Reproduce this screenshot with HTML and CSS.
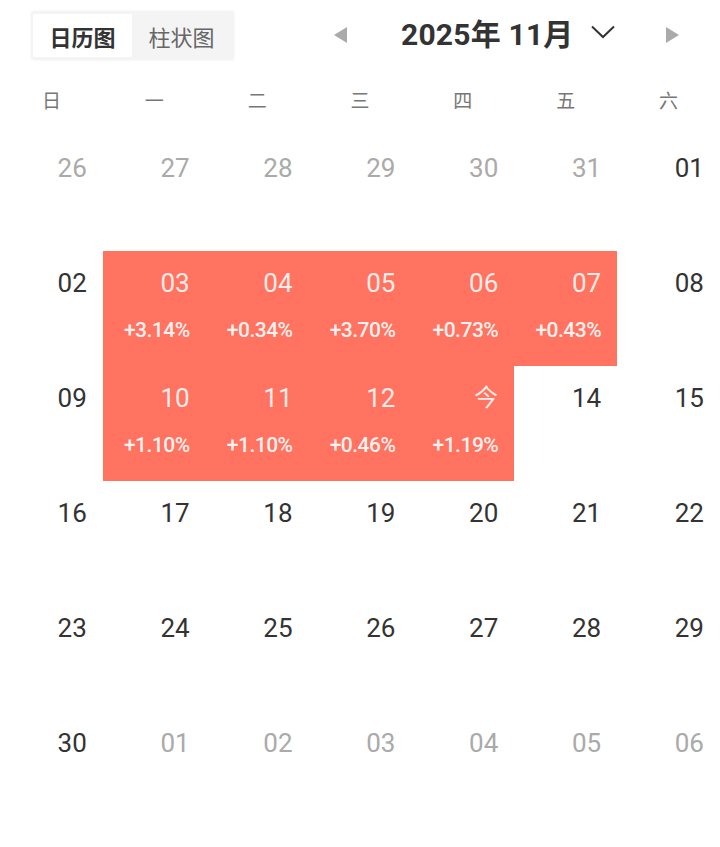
FILE: index.html
```html
<!DOCTYPE html>
<html lang="zh">
<head>
<meta charset="utf-8">
<title>日历图</title>
<link rel="stylesheet" href="styles.css">
</head>
<body>
<div class="page">
  <header class="header">
    <div class="tabs">
      <div class="tab active">日历图</div>
      <div class="tab">柱状图</div>
    </div>
    <div class="nav">
      <svg class="tri" width="13" height="16" viewBox="0 0 13 16"><path d="M13 0 L0 8 L13 16 Z" fill="#aaaaaa"/></svg>
      <div class="title">2025年 11月</div>
      <svg class="chev" width="24" height="14" viewBox="0 0 24 14"><path d="M1 1.5 L12 12 L23 1.5" fill="none" stroke="#333" stroke-width="2"/></svg>
      <svg class="tri right" width="13" height="16" viewBox="0 0 13 16"><path d="M0 0 L13 8 L0 16 Z" fill="#aaaaaa"/></svg>
    </div>
  </header>

  <div class="weekdays">
    <div>日</div><div>一</div><div>二</div><div>三</div><div>四</div><div>五</div><div>六</div>
  </div>

  <div class="grid">
    <div class="cell other"><span class="num">26</span></div>
    <div class="cell other"><span class="num">27</span></div>
    <div class="cell other"><span class="num">28</span></div>
    <div class="cell other"><span class="num">29</span></div>
    <div class="cell other"><span class="num">30</span></div>
    <div class="cell other"><span class="num">31</span></div>
    <div class="cell"><span class="num">01</span></div>

    <div class="cell"><span class="num">02</span></div>
    <div class="cell hot"><span class="num">03</span><span class="pct">+3.14%</span></div>
    <div class="cell hot"><span class="num">04</span><span class="pct">+0.34%</span></div>
    <div class="cell hot"><span class="num">05</span><span class="pct">+3.70%</span></div>
    <div class="cell hot"><span class="num">06</span><span class="pct">+0.73%</span></div>
    <div class="cell hot"><span class="num">07</span><span class="pct">+0.43%</span></div>
    <div class="cell"><span class="num">08</span></div>

    <div class="cell"><span class="num">09</span></div>
    <div class="cell hot"><span class="num">10</span><span class="pct">+1.10%</span></div>
    <div class="cell hot"><span class="num">11</span><span class="pct">+1.10%</span></div>
    <div class="cell hot"><span class="num">12</span><span class="pct">+0.46%</span></div>
    <div class="cell hot"><span class="num today">今</span><span class="pct">+1.19%</span></div>
    <div class="cell"><span class="num">14</span></div>
    <div class="cell"><span class="num">15</span></div>

    <div class="cell"><span class="num">16</span></div>
    <div class="cell"><span class="num">17</span></div>
    <div class="cell"><span class="num">18</span></div>
    <div class="cell"><span class="num">19</span></div>
    <div class="cell"><span class="num">20</span></div>
    <div class="cell"><span class="num">21</span></div>
    <div class="cell"><span class="num">22</span></div>

    <div class="cell"><span class="num">23</span></div>
    <div class="cell"><span class="num">24</span></div>
    <div class="cell"><span class="num">25</span></div>
    <div class="cell"><span class="num">26</span></div>
    <div class="cell"><span class="num">27</span></div>
    <div class="cell"><span class="num">28</span></div>
    <div class="cell"><span class="num">29</span></div>

    <div class="cell"><span class="num">30</span></div>
    <div class="cell other"><span class="num">01</span></div>
    <div class="cell other"><span class="num">02</span></div>
    <div class="cell other"><span class="num">03</span></div>
    <div class="cell other"><span class="num">04</span></div>
    <div class="cell other"><span class="num">05</span></div>
    <div class="cell other"><span class="num">06</span></div>
  </div>
</div>
</body>
</html>
```

FILE: styles.css
```css
* { box-sizing: border-box; }
html, body {
  margin: 0;
  padding: 0;
  background: #ffffff;
}
body {
  font-family: "Roboto", "Noto Sans CJK SC", sans-serif;
  color: #333333;
}
.page {
  width: 720px;
}
.header {
  height: 72px;
  display: flex;
  align-items: flex-start;
}
.tabs {
  margin-left: 31px;
  margin-top: 11px;
  height: 49px;
  width: 203px;
  background: #f4f4f4;
  box-shadow: 0 0 3px rgba(0,0,0,0.06);
  border-radius: 3px;
  padding: 3px 2px;
  display: flex;
}
.tab {
  width: 99px;
  height: 43px;
  display: flex;
  align-items: center;
  justify-content: center;
  font-size: 22px;
  color: #666666;
}
.tab.active {
  background: #ffffff;
  color: #333333;
  font-weight: 700;
  border-radius: 2px;
}
.nav {
  margin-left: 100px;
  height: 70px;
  display: flex;
  align-items: center;
}
.tri { display: block; }
.title {
  margin-left: 54px;
  margin-bottom: 6px;
  font-size: 30px;
  font-weight: 700;
  color: #333333;
  letter-spacing: 0.2px;
}
.chev {
  display: block;
  margin-left: 17px;
  margin-bottom: 6px;
}
.tri.right {
  margin-left: 51px;
}
.weekdays {
  height: 54px;
  display: grid;
  grid-template-columns: repeat(7, 1fr);
  align-items: center;
  font-size: 19px;
  color: #777777;
  text-align: center;
  margin-bottom: 10px;
}
.grid {
  display: grid;
  grid-template-columns: repeat(7, 1fr);
  grid-auto-rows: 115px;
}
.cell {
  display: flex;
  flex-direction: column;
  align-items: flex-end;
  padding-right: 16px;
  padding-top: 16px;
}
.num {
  font-size: 26px;
  line-height: 32px;
  color: #333333;
}
.cell.other .num {
  color: #aaaaaa;
}
.cell.hot {
  background: #ff7360;
}
.cell.hot .num {
  color: rgba(255,255,255,0.88);
}
.num.today {
  font-size: 24px;
}
.pct {
  margin-top: 20px;
  font-size: 21px;
  line-height: 22px;
  font-weight: 500;
  color: rgba(255,255,255,0.92);
  letter-spacing: -0.5px;
}
```
